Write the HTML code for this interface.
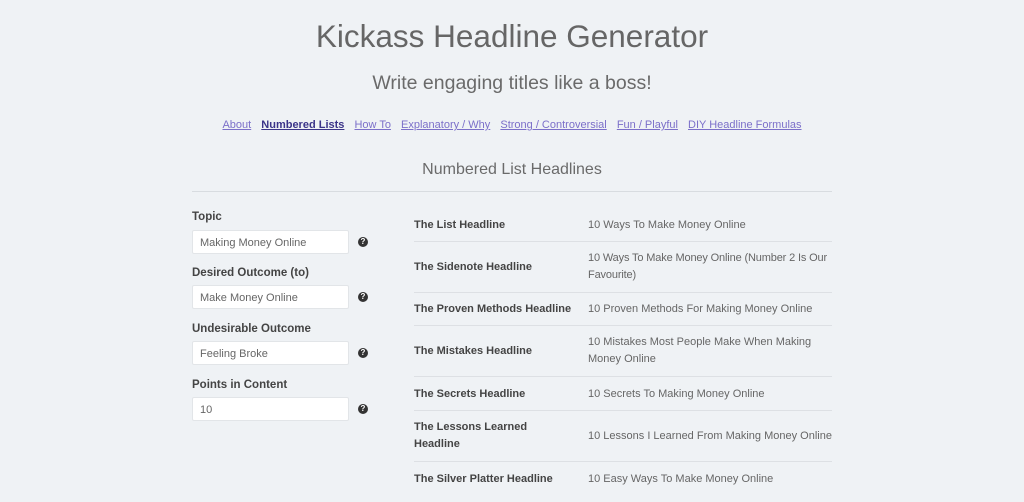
<!DOCTYPE html>
<html><head><meta charset="utf-8"><style>
*{margin:0;padding:0;box-sizing:border-box}
body{width:1024px;height:481px;overflow:hidden;background:#eff2f5;font-family:"Liberation Sans",sans-serif;color:#555;position:relative}
h1{position:absolute;left:0;width:1024px;top:18px;text-align:center;font-weight:normal;font-size:31.5px;color:#666}
.sub{position:absolute;left:0;width:1024px;top:72px;text-align:center;font-size:19.5px;color:#6a6a6a}
.nav{position:absolute;left:0;width:1024px;top:119px;text-align:center;font-size:11px}
.nav a{color:#7b6fc9;text-decoration:underline;margin:0 3.5px}
.nav a.on{color:#3b3489;font-weight:bold}
.sec{position:absolute;left:0;width:1024px;top:161px;text-align:center;font-size:16px;color:#6a6a6a}
.hr{position:absolute;left:192px;width:640px;top:191px;border-top:1px solid #d8dce0}
.lab{position:absolute;left:192px;font-size:11.5px;font-weight:bold;color:#444}
.inp{position:absolute;left:192px;width:157px;height:24px;background:#fff;border:1px solid #e2e5e8;border-radius:2px;font-size:11px;color:#666;padding:6px 7px}
.q{position:absolute;left:358px;width:10px;height:10px;border-radius:50%;background:#333;color:#fff;font-size:8px;font-weight:bold;text-align:center;line-height:10px}
.row{position:absolute;left:414px;width:418px;border-bottom:1px solid #dde0e4}
.h{position:absolute;left:0;font-size:11px;font-weight:bold;color:#444;line-height:17px;width:165px}
.v{position:absolute;left:174px;font-size:11px;color:#666;line-height:17px;width:244px}
</style></head><body>
<h1>Kickass Headline Generator</h1>
<div class="sub">Write engaging titles like a boss!</div>
<div class="nav"><a>About</a> <a class="on">Numbered Lists</a> <a>How To</a> <a>Explanatory / Why</a> <a>Strong / Controversial</a> <a>Fun / Playful</a> <a>DIY Headline Formulas</a></div>
<div class="sec">Numbered List Headlines</div>
<div class="hr"></div>

<div class="lab" style="top:211px">Topic</div>
<div class="inp" style="top:230px">Making Money Online</div><div class="q" style="top:237px">?</div>
<div class="lab" style="top:267px">Desired Outcome (to)</div>
<div class="inp" style="top:285px">Make Money Online</div><div class="q" style="top:292px">?</div>
<div class="lab" style="top:323px">Undesirable Outcome</div>
<div class="inp" style="top:341px">Feeling Broke</div><div class="q" style="top:348px">?</div>
<div class="lab" style="top:379px">Points in Content</div>
<div class="inp" style="top:397px">10</div><div class="q" style="top:404px">?</div>

<div class="row" style="top:208px;height:34px"><div class="h" style="top:9px">The List Headline</div><div class="v" style="top:9px">10 Ways To Make Money Online</div></div>
<div class="row" style="top:242px;height:51px"><div class="h" style="top:17px">The Sidenote Headline</div><div class="v" style="top:8px;width:250px;letter-spacing:-0.15px">10 Ways To Make Money Online (Number 2 Is Our Favourite)</div></div>
<div class="row" style="top:293px;height:33px"><div class="h" style="top:8px">The Proven Methods Headline</div><div class="v" style="top:8px">10 Proven Methods For Making Money Online</div></div>
<div class="row" style="top:326px;height:51px"><div class="h" style="top:17px">The Mistakes Headline</div><div class="v" style="top:8px">10 Mistakes Most People Make When Making Money Online</div></div>
<div class="row" style="top:377px;height:34px"><div class="h" style="top:9px">The Secrets Headline</div><div class="v" style="top:9px">10 Secrets To Making Money Online</div></div>
<div class="row" style="top:411px;height:51px"><div class="h" style="top:8px;width:130px">The Lessons Learned Headline</div><div class="v" style="top:17px">10 Lessons I Learned From Making Money Online</div></div>
<div class="row" style="top:462px;height:40px;border:none"><div class="h" style="top:9px">The Silver Platter Headline</div><div class="v" style="top:9px">10 Easy Ways To Make Money Online</div></div>
</body></html>
